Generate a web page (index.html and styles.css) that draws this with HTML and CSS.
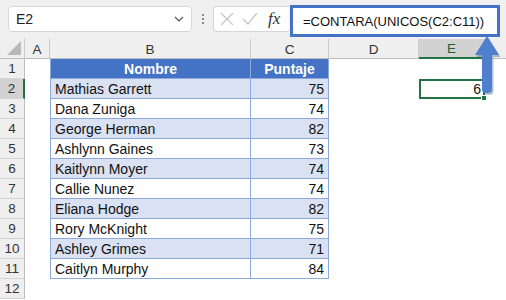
FILE: index.html
```html
<!DOCTYPE html>
<html>
<head lang="es">
    <meta charset="UTF-8">
    <title>CONTARA UNICOS</title>
    <link rel="stylesheet" href="styles.css">
</head>
<body>
<div id="app">
    <div class="bar">
        <div class="namebox">
            <span>E2</span>
            <svg class="chev" width="10" height="6" viewBox="0 0 10 6"><path d="M1 1l4 4 4-4" fill="none" stroke="#555" stroke-width="1.2"/></svg>
        </div>
        <div class="dots"><i></i><i></i><i></i></div>
        <div class="fnbox">
            <svg width="14" height="14" viewBox="0 0 14 14"><path d="M1 1l12 12M13 1L1 13" stroke="#c4c4c4" stroke-width="1.2"/></svg>
            <svg width="16" height="14" viewBox="0 0 16 14"><path d="M1 7l5 5L15 1" fill="none" stroke="#c4c4c4" stroke-width="1.2"/></svg>
            <span class="fx">fx</span>
        </div>
        <div class="formula">=CONTARA(UNICOS(C2:C11))</div>
    </div>
    <div class="sheet">
        <div class="hd corner"><b></b></div>
        <div class="hd col">A</div>
        <div class="hd col">B</div>
        <div class="hd col">C</div>
        <div class="hd col">D</div>
        <div class="hd col sel">E</div>
        <div class="hd col last"></div>

        <div class="hd row">1</div><div class="c"></div><div class="c t th tl">Nombre</div><div class="c t th">Puntaje</div><div class="c"></div><div class="c"></div><div class="c"></div>
        <div class="hd row sel">2</div><div class="c"></div><div class="c t b tl">Mathias Garrett</div><div class="c t b n">75</div><div class="c"></div><div class="c act">6<span class="handle"></span></div><div class="c"></div>
        <div class="hd row">3</div><div class="c"></div><div class="c t tl">Dana Zuniga</div><div class="c t n">74</div><div class="c"></div><div class="c"></div><div class="c"></div>
        <div class="hd row">4</div><div class="c"></div><div class="c t b tl">George Herman</div><div class="c t b n">82</div><div class="c"></div><div class="c"></div><div class="c"></div>
        <div class="hd row">5</div><div class="c"></div><div class="c t tl">Ashlynn Gaines</div><div class="c t n">73</div><div class="c"></div><div class="c"></div><div class="c"></div>
        <div class="hd row">6</div><div class="c"></div><div class="c t b tl">Kaitlynn Moyer</div><div class="c t b n">74</div><div class="c"></div><div class="c"></div><div class="c"></div>
        <div class="hd row">7</div><div class="c"></div><div class="c t tl">Callie Nunez</div><div class="c t n">74</div><div class="c"></div><div class="c"></div><div class="c"></div>
        <div class="hd row">8</div><div class="c"></div><div class="c t b tl">Eliana Hodge</div><div class="c t b n">82</div><div class="c"></div><div class="c"></div><div class="c"></div>
        <div class="hd row">9</div><div class="c"></div><div class="c t tl">Rory McKnight</div><div class="c t n">75</div><div class="c"></div><div class="c"></div><div class="c"></div>
        <div class="hd row">10</div><div class="c"></div><div class="c t b tl">Ashley Grimes</div><div class="c t b n">71</div><div class="c"></div><div class="c"></div><div class="c"></div>
        <div class="hd row">11</div><div class="c"></div><div class="c t tl">Caitlyn Murphy</div><div class="c t n">84</div><div class="c"></div><div class="c"></div><div class="c"></div>
        <div class="hd row">12</div><div class="c"></div><div class="c"></div><div class="c"></div><div class="c"></div><div class="c"></div><div class="c"></div>
    </div>
    <svg class="arrow" width="34" height="64" viewBox="0 0 34 64">
        <path d="M17 1L29 20H22V54Q22 58 18 58H16Q12 58 12 54V20H5Z" fill="#2d4f8a" opacity="0.35" transform="translate(1.5 2)"/>
        <path d="M17 1L29 20H22V54Q22 58 18 58H16Q12 58 12 54V20H5Z" fill="#4f7fcd"/>
    </svg>
</div>
</body>
</html>
```

FILE: styles.css
```css
*{
    margin: 0;
    padding: 0;
    box-sizing: border-box;
}
body{
    background: #fff;
    font-family: "Liberation Sans", Arial, sans-serif;
}
#app{
    position: relative;
    width: 506px;
    height: 300px;
    overflow: hidden;
}
.bar{
    height: 39px;
    background: #f0f0f0;
    display: flex;
    align-items: flex-start;
    padding: 5px 0 0 8px;
}
.namebox{
    width: 184px;
    height: 26px;
    margin-top: 1px;
    background: #fff;
    border: 1px solid #d6d6d6;
    border-radius: 4px;
    display: flex;
    align-items: center;
    justify-content: space-between;
    padding: 0 7px 0 7px;
    font-size: 14px;
    color: #222;
}
.dots{
    width: 21px;
    height: 26px;
    display: flex;
    flex-direction: column;
    align-items: center;
    justify-content: center;
    gap: 2px;
    margin-top: 1px;
}
.dots i{
    width: 2px;
    height: 2px;
    background: #8a8a8a;
}
.fnbox{
    width: 76px;
    height: 26px;
    margin-top: 1px;
    background: #fff;
    border: 1px solid #d6d6d6;
    border-right: 0;
    border-radius: 4px 0 0 4px;
    display: flex;
    align-items: center;
    gap: 8px;
    padding-left: 6px;
}
.fx{
    font-family: "Liberation Serif", serif;
    font-style: italic;
    font-size: 17px;
    color: #333;
    margin-left: 2px;
}
.formula{
    width: 210px;
    height: 32px;
    margin-left: 1px;
    background: #fff;
    border: 3px solid #4472c4;
    font-size: 13px;
    color: #111;
    padding: 6px 0 0 10px;
}
.sheet{
    display: grid;
    grid-template-columns: 25px 25px 201px 78px 90px 66px 21px;
    grid-auto-rows: 20px;
    font-size: 14px;
}
.hd{
    background: #efefef;
    color: #333;
    font-size: 13.5px;
    display: flex;
    align-items: center;
    justify-content: center;
}
.col{
    border-right: 1px solid #c9c9c9;
    border-bottom: 1px solid #bdbdbd;
    padding-top: 1px;
}
.col.last{
    border-right: 0;
}
.corner{
    border-right: 1px solid #c9c9c9;
    border-bottom: 1px solid #bdbdbd;
    justify-content: flex-end;
    align-items: flex-end;
    padding: 0 3px 3px 0;
}
.corner b{
    width: 0;
    height: 0;
    border-left: 14px solid transparent;
    border-bottom: 14px solid #b9b9b9;
}
.row{
    border-right: 1px solid #bdbdbd;
    border-bottom: 1px solid #d4d4d4;
}
.hd.sel{
    background: #d2d2d2;
    color: #1d5e3a;
}
.col.sel{
    border-bottom: 2px solid #217346;
}
.row.sel{
    border-right: 2px solid #217346;
    color: #333;
}
.c{
    display: flex;
    align-items: center;
    padding: 0 4px;
    color: #111;
}
.t{
    border-right: 1px solid #8ea9db;
    border-bottom: 1px solid #8ea9db;
}
.tl{
    border-left: 1px solid #8ea9db;
}
.b{
    background: #d9e1f2;
}
.th{
    background: #4472c4;
    color: #fff;
    font-weight: bold;
    justify-content: center;
    border-color: #8ea9db;
}
.n{
    justify-content: flex-end;
}
.act{
    position: relative;
    justify-content: flex-end;
    border: 2px solid #217346;
    padding-right: 2px;
}
.handle{
    position: absolute;
    right: -4px;
    bottom: -4px;
    width: 6px;
    height: 6px;
    background: #217346;
    border: 1px solid #fff;
}
.arrow{
    position: absolute;
    left: 470px;
    top: 35px;
}
```
